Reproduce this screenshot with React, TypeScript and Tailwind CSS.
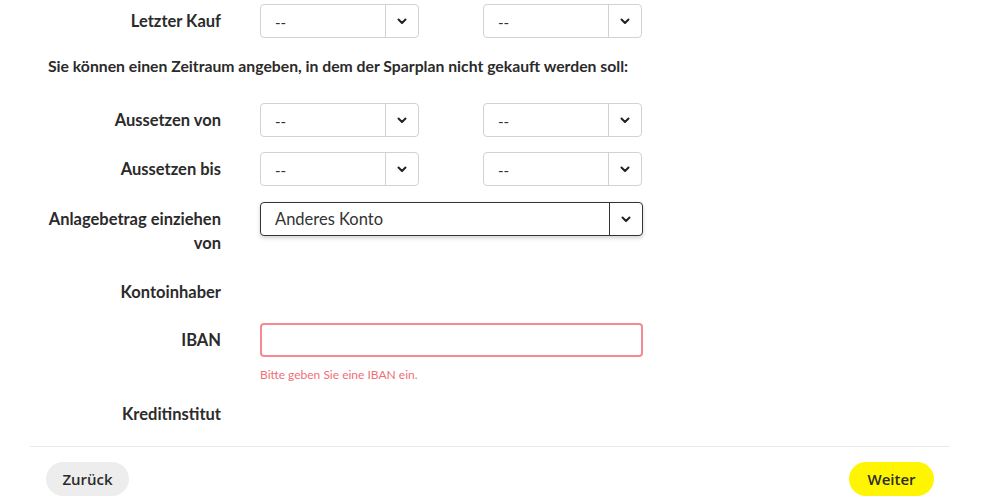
import React from "react";

const Chevron = () => (
  <svg width="10" height="7" viewBox="0 0 10 7" fill="none">
    <path d="M1.5 1.5l3.5 3.5 3.5-3.5" stroke="#222" strokeWidth="2" strokeLinecap="round" strokeLinejoin="round" />
  </svg>
);

interface SelectProps {
  value: string;
  active?: boolean;
}

const Select: React.FC<SelectProps> = ({ value, active }) => (
  <div
    className={
      active
        ? "flex h-[34px] w-[383px] items-stretch rounded-[4px] border border-[#333] bg-white shadow-[0_2px_4px_rgba(0,0,0,0.18)]"
        : "flex h-[34px] w-[159px] items-stretch rounded-[4px] border border-[#d2d2d2] bg-white"
    }
  >
    <div
      className={
        active
          ? "flex flex-1 items-center pl-[14px] text-[16.5px] text-[#333]"
          : "flex flex-1 items-center pl-[14px] pt-[2px] text-[15px] text-[#333]"
      }
    >
      {value}
    </div>
    <div
      className={
        active
          ? "flex w-[33px] items-center justify-center border-l border-[#333]"
          : "flex w-[33px] items-center justify-center border-l border-[#d2d2d2]"
      }
    >
      <Chevron />
    </div>
  </div>
);

const Label: React.FC<{ children: React.ReactNode }> = ({ children }) => (
  <div className="w-[221px] shrink-0 pt-[5px] text-right text-[16.5px] font-bold leading-[24px] text-[#2b2b2b]">
    {children}
  </div>
);

const Row: React.FC<{ label: React.ReactNode; className?: string; children?: React.ReactNode }> = ({
  label,
  className,
  children,
}) => (
  <div className={"flex min-h-[34px] items-start " + (className ?? "")}>
    <Label>{label}</Label>
    <div className="ml-[39px] flex flex-col">{children}</div>
  </div>
);

const DatePair = () => (
  <div className="flex gap-[64px]">
    <Select value="--" />
    <Select value="--" />
  </div>
);

export default function App() {
  return (
    <div
      className="relative h-[504px] w-[998px] overflow-hidden bg-white"
      style={{ fontFamily: "Lato, 'Open Sans', sans-serif" }}
    >
      <div className="pt-[4px]">
        <Row label="Letzter Kauf">
          <DatePair />
        </Row>

        <p className="mt-[16px] pl-[48px] text-[15.75px] font-bold leading-[24px] text-[#2b2b2b]">
          Sie können einen Zeitraum angeben, in dem der Sparplan nicht gekauft werden soll:
        </p>

        <Row label="Aussetzen von" className="mt-[25px]">
          <DatePair />
        </Row>

        <Row label="Aussetzen bis" className="mt-[15px]">
          <DatePair />
        </Row>

        <Row
          label={
            <>
              Anlagebetrag einziehen
              <br />
              von
            </>
          }
          className="mt-[16px]"
        >
          <Select value="Anderes Konto" active />
        </Row>

        <Row label="Kontoinhaber" className="mt-[20px]" />

        <Row label="IBAN" className="mt-[14px]">
          <input
            type="text"
            className="h-[34px] w-[383px] rounded-[4px] border-2 border-[#f58a92] bg-white px-[14px] outline-none"
          />
          <span className="mt-[10px] text-[12px] leading-[16px] text-[#f06e78]">
            Bitte geben Sie eine IBAN ein.
          </span>
        </Row>

        <Row label="Kreditinstitut" className="mt-[14px]" />

        <div className="mx-[30px] mt-[15px] w-[920px] border-t border-[#ebebeb]" />

        <div className="mt-[15px] flex justify-between pl-[46px] pr-[64px]">
          <button
            className="h-[34px] w-[83px] rounded-full bg-[#ededed] text-[15px] font-semibold text-[#2b2b2b]"
            style={{ fontFamily: "'Open Sans', sans-serif" }}
          >
            Zurück
          </button>
          <button
            className="h-[34px] w-[85px] rounded-full bg-[#fff500] text-[15px] font-semibold text-[#2b2b2b]"
            style={{ fontFamily: "'Open Sans', sans-serif" }}
          >
            Weiter
          </button>
        </div>
      </div>
    </div>
  );
}
